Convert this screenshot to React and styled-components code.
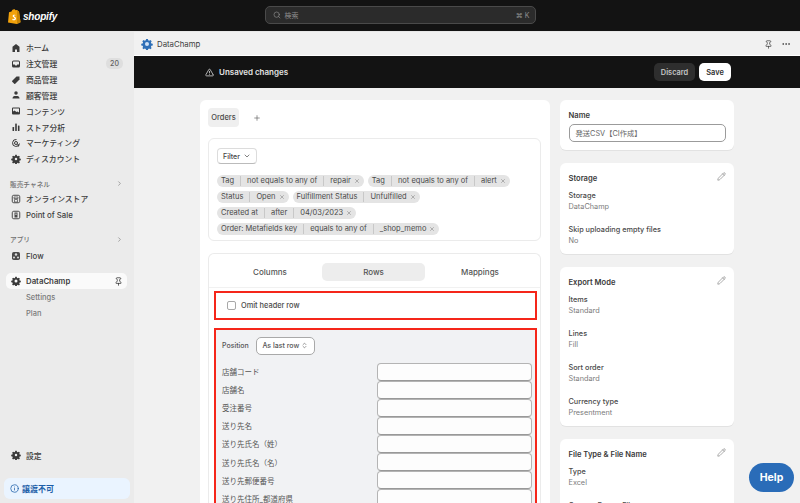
import React from "react";
import styled, { createGlobalStyle } from "styled-components";
import { Search, TriangleAlert, Pencil, ChevronRight, ChevronDown, ChevronsUpDown, Pin, Ellipsis, Info, Plus, X } from "lucide-react";

const FONT = `Inter, "Noto Sans CJK JP", "Noto Sans", sans-serif`;

const Global = createGlobalStyle`
  * { box-sizing: border-box; }
  html, body { margin: 0; padding: 0; background: #f1f1f1; }
  body { font-family: ${FONT}; color: #303030; -webkit-font-smoothing: antialiased; }
`;

const Frame = styled.div`
  position: relative; width: 800px; height: 503px; overflow: hidden;
  display: flex; flex-direction: column; background: #f1f1f1;
`;
const TopBar = styled.header`
  height: 32px; flex: none; background: #131313; position: relative;
  display: flex; align-items: center; justify-content: center; border-bottom: 1px solid #e8e8e8;
`;
const Brand = styled.div`
  position: absolute; left: 8px; top: 9px; display: flex; align-items: center; gap: 2px;
`;
const BrandText = styled.span`
  font-family: "Liberation Sans", sans-serif; font-weight: 700; font-style: italic;
  font-size: 10px; color: #fff; letter-spacing: -0.2px;
`;
const SearchBox = styled.div`
  width: 271px; height: 18px; margin-top: -1px; border-radius: 5px; background: #2b2b2b; border: 1px solid #4a4a4a;
  display: flex; align-items: center; gap: 4px; padding: 0 5px 0 7px; color: #8d8d8d; font-size: 7px;
  span:last-child { margin-left: auto; }
`;
const Body = styled.div`
  flex: 1; min-height: 0; display: flex;
`;
const Sidebar = styled.nav`
  width: 134px; flex: none; background: #ebebeb; display: flex; flex-direction: column; padding: 8px 0 4px;
`;
const NavItem = styled.div`
  height: ${p => (p.$active ? 16 : 15.85)}px; flex: none; display: flex; align-items: center; gap: 5px;
  margin: ${p => (p.$active ? "9px 7px 0 6px" : "0 11px")}; padding: ${p => (p.$active ? "0 4px 0 5px" : "0")};
  font-size: 7.8px; font-weight: ${p => (p.$active ? 600 : 500)}; color: #3d3d3d;
  background: ${p => (p.$active ? "#fafafa" : "transparent")}; border-radius: 5px;
  svg { flex: none; }
`;
const NavBadge = styled.span`
  margin-left: auto; width: 17px; height: 11px; border-radius: 5px; background: #dedede;
  font-size: 7px; color: #616161; display: flex; align-items: center; justify-content: center;
`;
const NavPin = styled.span`
  margin-left: auto; display: flex; color: #303030;
`;
const SubItem = styled.div`
  height: 16px; padding-left: 26px; display: flex; align-items: center; font-size: 7.5px; color: #7a7a7a; font-weight: 500;
`;
const NavHead = styled.div`
  height: 14px; flex: none; margin: 10px 11px ${p => p.$bottom || 0}px 10px; display: flex; align-items: center; justify-content: space-between;
  font-size: 6.7px; color: #6f6f6f; font-weight: 500;
`;
const NavSpacer = styled.div`flex: 1;`;
const Banner = styled.div`
  margin: 15px 4px 0; height: 21px; flex: none; border-radius: 6px; background: #eaf4ff; color: #1c5ea8;
  display: flex; align-items: center; gap: 3px; padding-left: 6px; font-size: 8px; font-weight: 600;
`;
const Main = styled.main`
  flex: 1; min-width: 0; display: flex; flex-direction: column;
`;
const AppHeader = styled.div`
  height: 24px; flex: none; display: flex; align-items: center; gap: 4px; padding: 1px 9px 0 7px; font-size: 7.8px; color: #3d3d3d;
  border-bottom: 1px solid #fff;
`;
const HeaderActions = styled.div`
  margin-left: auto; display: flex; align-items: center; gap: 8px; color: #444;
`;
const SaveBar = styled.div`
  height: 32px; flex: none; background: #131313; display: flex; align-items: center; padding: 0 69px 0 71px; color: #e3e3e3;
  font-size: 8px; font-weight: 600; gap: 5px;
`;
const BarActions = styled.div`margin-left: auto; display: flex; gap: 4px;`;
const DarkButton = styled.button`
  height: 18px; width: ${p => (p.$primary ? 32 : 41)}px; padding: 0; border: 0; border-radius: 5px; font: 600 7.4px ${FONT};
  background: ${p => (p.$primary ? "#fff" : "#2e2e2e")}; color: ${p => (p.$primary ? "#303030" : "#c4c4c4")};
`;
const Content = styled.div`
  flex: 1; display: flex; gap: 10px; padding: 12px 0 0 66px; overflow: hidden; align-items: flex-start;
`;
const LeftCard = styled.section`
  width: 350px; flex: none; background: #fff; border-radius: 6px 6px 0 0; padding: 8px 9px 0 8px;
`;
const OrderTabs = styled.div`display: flex; align-items: center; gap: 14px; color: #616161; margin-bottom: 11px;`;
const OrderTab = styled.div`
  width: 31px; height: 19px; border-radius: 4px; background: #efefef; font-size: 7.5px; font-weight: 500; color: #4a4a4a;
  display: flex; align-items: center; justify-content: center;
`;
const Inner = styled.div`
  border: 1px solid #ebebeb; border-radius: 6px; background: #fff;
`;
const FilterCard = styled(Inner)`
  height: 103px; padding: 9px 8px; margin-bottom: 12px;
`;
const FilterBtn = styled.div`
  width: 40px; height: 16px; border-radius: 4px; border: 1px solid #dcdcdc; border-bottom-color: #bbb;
  display: flex; align-items: center; justify-content: center; gap: 3px; font-size: 7px; font-weight: 500; color: #444; margin-bottom: 11px;
`;
const ChipWrap = styled.div`display: flex; flex-wrap: wrap; gap: 4px; width: 316px;`;
const Chip = styled.div`
  height: 12px; border-radius: 6px; background: #e4e4e4; display: flex; align-items: center; padding: 0 4px; font-size: 7.5px;
  color: #4a4a4a; white-space: nowrap; font-weight: 400;
  svg { margin-left: 3px; color: #777; }
`;
const ChipPart = styled.span`
  padding: 0 6px; border-left: 1px solid #c8c8c8; line-height: 10px;
  &:first-child { padding-left: 0; border-left: 0; }
  &:nth-last-of-type(1) { padding-right: 0; }
`;
const TabsCard = styled(Inner)`border-radius: 6px 6px 0 0; border-bottom: 0;`;
const TabRow = styled.div`
  height: 34px; display: grid; grid-template-columns: 104px 103px 110px; align-items: center;
  padding: 2px 0 0 9px; border-bottom: 1px solid #f1f1f1; margin: 0 0 3px;
`;
const TabItem = styled.div`
  height: 18px; border-radius: 5px; display: flex; align-items: center; justify-content: center; font-size: 8px; font-weight: 500; color: #555;
  background: ${p => (p.$active ? "#ededed" : "transparent")};
`;
const RedBox = styled.div`
  margin: 0 3px 8px 5px; border: 2px solid #f5261a; background: ${p => (p.$grey ? "#f1f2f4" : "#fff")};
`;
const OmitRow = styled.div`
  height: 25px; display: flex; align-items: center; gap: 5px; padding-left: 11px; font-size: 7.4px; font-weight: 500; color: #4a4a4a;
`;
const Checkbox = styled.span`
  width: 9px; height: 9px; border: 1px solid #a8a8a8; border-radius: 2px; background: #fff;
`;
const PositionRow = styled.div`
  display: flex; align-items: center; gap: 7px; padding: 6px 6px 0; height: 25px; font-size: 7px; color: #555; font-weight: 500; margin-bottom: 7.5px;
`;
const Select = styled.div`
  width: 59px; height: 18px; border-radius: 5px; border: 1px solid #a9a9a9; background: #fff;
  display: flex; align-items: center; justify-content: center; gap: 2px; font-size: 7px; color: #555;
`;
const FieldRow = styled.div`
  display: flex; align-items: center; justify-content: space-between; height: 18.1px; padding: 0 3px 0 6px; font-size: 7.5px; color: #555;
`;
const FieldInput = styled.div`
  width: 155px; height: 18.1px; border-radius: 4px; border: 1px solid #b4b4b4; border-bottom-color: #999; background: #fdfdfd;
`;
const RightCol = styled.aside`
  width: 174px; flex: none; display: flex; flex-direction: column; gap: 13px;
`;
const Card = styled.section`
  position: relative; background: #fff; border-radius: 6px; padding: 9.5px 8.5px 8.5px; box-shadow: 0 1px 0 #e2e2e2; flex: none;
`;
const CardTitle = styled.h3`
  margin: 0 0 6px; font-size: 7.6px; font-weight: 600; color: #3a3a3a; line-height: 11px;
`;
const NameInput = styled.div`
  height: 18px; margin-top: -3px; border-radius: 5px; border: 1px solid #9b9b9b; padding-left: 6px; font-size: 7.3px; color: #666;
  display: flex; align-items: center;
`;
const EditIcon = styled.span`
  position: absolute; right: 8px; top: 9px; display: flex; color: #777;
`;
const Prop = styled.div`
  margin-bottom: 12px; font-size: 7.3px; line-height: 11px; color: #4a4a4a; font-weight: 500;
  &:last-child { margin-bottom: 0; }
`;
const PropValue = styled.div`color: #7b7b7b; font-weight: 400;`;
const HelpButton = styled.div`
  position: absolute; right: 6px; top: 463px; width: 45px; height: 29px; border-radius: 15px; background: #2a6cb8; color: #fff;
  display: flex; align-items: center; justify-content: center; font-size: 10.5px; font-weight: 700;
`;

const Ico = ({ children, s = 10 }) => (
  <svg width={s} height={s} viewBox="0 0 20 20" fill="#3a3a3a">{children}</svg>
);
const GearPath = "M8.5 1.5h3l.5 2.4 1.7.7 2-1.3 2.1 2.1-1.3 2 .7 1.7 2.4.5v3l-2.4.5-.7 1.7 1.3 2-2.1 2.1-2-1.3-1.7.7-.5 2.4h-3l-.5-2.4-1.7-.7-2 1.3-2.1-2.1 1.3-2-.7-1.7-2.4-.5v-3l2.4-.5.7-1.7-1.3-2 2.1-2.1 2 1.3 1.7-.7z";
const icons = {
  home: <Ico><path d="M10 2 3 7.5V18h5v-5h4v5h5V7.5z" /></Ico>,
  inbox: <Ico><path fillRule="evenodd" d="M5 3h10a3 3 0 0 1 3 3v8a3 3 0 0 1-3 3H5a3 3 0 0 1-3-3V6a3 3 0 0 1 3-3zm-1 8h3.5l1 2h3l1-2H16V6a1 1 0 0 0-1-1H5a1 1 0 0 0-1 1z" /></Ico>,
  tag: <Ico><path d="M11 3h6v6l-8.5 8.5a1.5 1.5 0 0 1-2 0l-4-4a1.5 1.5 0 0 1 0-2z" /></Ico>,
  user: <Ico><circle cx="10" cy="6" r="3.5" /><path d="M3 17c0-3 2-5 4-5h6c2 0 4 2 4 5z" /></Ico>,
  image: <Ico><path fillRule="evenodd" d="M4 3h12a2 2 0 0 1 2 2v10a2 2 0 0 1-2 2H4a2 2 0 0 1-2-2V5a2 2 0 0 1 2-2zm0 2v6l3-2 4 3 2-1 3 2V5z" /></Ico>,
  chart: <Ico><rect x="3" y="10" width="3.2" height="8" rx="1" /><rect x="8.4" y="3" width="3.2" height="15" rx="1" /><rect x="13.8" y="7" width="3.2" height="11" rx="1" /></Ico>,
  target: <Ico><path fill="none" stroke="#3a3a3a" strokeWidth="2" d="M11 3a7 7 0 1 0 6 8" /><circle cx="10" cy="10" r="3" fill="none" stroke="#3a3a3a" strokeWidth="2" /><path d="m12 12 6 2-2 1-1 3z" /></Ico>,
  gear: <Ico><path fillRule="evenodd" d={GearPath + "M10 7.5a2.5 2.5 0 1 0 0 5 2.5 2.5 0 0 0 0-5z"} /></Ico>,
  store: <Ico><rect x="2.5" y="2.5" width="15" height="15" rx="3" fill="#e9e9e9" stroke="#4a4a4a" strokeWidth="2" /><path d="M6 6h8v3H6zM7 11h6v5H7z" fill="none" stroke="#4a4a4a" strokeWidth="1.4" /></Ico>,
  pos: <Ico><rect x="2.5" y="2.5" width="15" height="15" rx="3" fill="#e9e9e9" stroke="#4a4a4a" strokeWidth="2" /><path d="M7 5h6v10H7z" fill="#4a4a4a" /><path d="M9 7h2v3H9z" fill="#eee" /></Ico>,
  flow: <Ico><rect x="2" y="2" width="16" height="16" rx="3.5" fill="#4a4a4a" /><circle cx="10" cy="7" r="2.4" fill="#ddd" /><circle cx="6" cy="13" r="2" fill="#ddd" /><circle cx="14" cy="13" r="2" fill="#ddd" /></Ico>,
};

const Bag = () => (
  <svg width="13" height="15" viewBox="0 0 13 15">
    <path d="M1 3.2 3.5 2.4C4 1 5 .3 6 .3c.8 0 1.3.5 1.6 1L9 1l1 1.2 1 .2 1.5 10.6L8.6 15 0 13.4z" fill="#f2a20c" />
    <path d="M9 1v14l3.5-1.4L11 2.4z" fill="#c98505" />
    <path d="M7.2 5.8c-.5-.2-2.6-.4-2.6 1.2 0 1.4 2 1.4 2 2.6 0 .8-1.2.7-2 .2l-.3 1.2c1.4.7 3.7.3 3.7-1.6 0-1.6-2-1.7-2-2.5 0-.5.7-.5 1.4-.2z" fill="#fff" />
  </svg>
);
const CogLogo = ({ color = "#2e6fb7", size = 12, dot = true }) => (
  <svg width={size} height={size} viewBox="0 0 20 20">
    <path fill={color} d={GearPath} />
    {dot && <circle cx="10" cy="10" r="3.4" fill="#cfe0f5" />}
    {!dot && <circle cx="10" cy="10" r="3" fill="#fafafa" />}
  </svg>
);
const PinIcon = ({ size = 10 }) => <Pin size={size} strokeWidth={2} />;

const navMain = [
  ["home", "ホーム"], ["inbox", "注文管理", "20"], ["tag", "商品管理"], ["user", "顧客管理"],
  ["image", "コンテンツ"], ["chart", "ストア分析"], ["target", "マーケティング"], ["gear", "ディスカウント"],
];
const chips = [
  ["Tag", "not equals to any of", "repair"],
  ["Tag", "not equals to any of", "alert"],
  ["Status", "Open"],
  ["Fulfillment Status", "Unfulfilled"],
  ["Created at", "after", "04/03/2023"],
  ["Order: Metafields key", "equals to any of", "_shop_memo"],
];
const fields = ["店舗コード", "店舗名", "受注番号", "送り先名", "送り先氏名（姓）", "送り先氏名（名）", "送り先郵便番号", "送り先住所_都道府県"];
const cards = [
  { title: "Storage", props: [["Storage", "DataChamp"], ["Skip uploading empty files", "No"]] },
  { title: "Export Mode", props: [["Items", "Standard"], ["Lines", "Fill"], ["Sort order", "Standard"], ["Currency type", "Presentment"]] },
  { title: "File Type & File Name", props: [["Type", "Excel"], ["Custom Export File", "No"]] },
];

export default function App() {
  return (
    <Frame>
      <Global />
      <TopBar>
        <Brand><Bag /><BrandText>shopify</BrandText></Brand>
        <SearchBox>
          <Search size={8} strokeWidth={2} />
          <span>検索</span>
          <span>⌘ K</span>
        </SearchBox>
      </TopBar>
      <Body>
        <Sidebar>
          {navMain.map(([icon, label, badge]) => (
            <NavItem key={label}>
              {icons[icon]}{label}
              {badge && <NavBadge>{badge}</NavBadge>}
            </NavItem>
          ))}
          <NavHead>販売チャネル<ChevronRight size={7} /></NavHead>
          <NavItem>{icons.store}オンラインストア</NavItem>
          <NavItem>{icons.pos}Point of Sale</NavItem>
          <NavHead $bottom={2}>アプリ<ChevronRight size={7} /></NavHead>
          <NavItem>{icons.flow}Flow</NavItem>
          <NavItem $active>
            <CogLogo color="#3a3a3a" size={10} dot={false} />DataChamp
            <NavPin><PinIcon size={9} /></NavPin>
          </NavItem>
          <SubItem>Settings</SubItem>
          <SubItem>Plan</SubItem>
          <NavSpacer />
          <NavItem>{icons.gear}設定</NavItem>
          <Banner><Info size={9} strokeWidth={2} />譲渡不可</Banner>
        </Sidebar>
        <Main>
          <AppHeader>
            <CogLogo />DataChamp
            <HeaderActions><PinIcon size={9} /><Ellipsis size={10} /></HeaderActions>
          </AppHeader>
          <SaveBar>
            <TriangleAlert size={9} strokeWidth={2} />Unsaved changes
            <BarActions>
              <DarkButton>Discard</DarkButton>
              <DarkButton $primary>Save</DarkButton>
            </BarActions>
          </SaveBar>
          <Content>
            <LeftCard>
              <OrderTabs><OrderTab>Orders</OrderTab><Plus size={8} /></OrderTabs>
              <FilterCard>
                <FilterBtn>Filter<ChevronDown size={8} /></FilterBtn>
                <ChipWrap>
                  {chips.map((parts, i) => (
                    <Chip key={i}>
                      {parts.map(p => <ChipPart key={p}>{p}</ChipPart>)}
                      <X size={6} />
                    </Chip>
                  ))}
                </ChipWrap>
              </FilterCard>
              <TabsCard>
                <TabRow>
                  <TabItem>Columns</TabItem>
                  <TabItem $active>Rows</TabItem>
                  <TabItem>Mappings</TabItem>
                </TabRow>
                <RedBox><OmitRow><Checkbox />Omit header row</OmitRow></RedBox>
                <RedBox $grey>
                  <PositionRow>Position<Select>As last row<ChevronsUpDown size={7} /></Select></PositionRow>
                  {fields.map(f => (
                    <FieldRow key={f}>{f}<FieldInput /></FieldRow>
                  ))}
                </RedBox>
              </TabsCard>
            </LeftCard>
            <RightCol>
              <Card>
                <CardTitle>Name</CardTitle>
                <NameInput>発送CSV【CI作成】</NameInput>
              </Card>
              {cards.map(c => (
                <Card key={c.title}>
                  <CardTitle>{c.title}</CardTitle>
                  <EditIcon><Pencil size={9} strokeWidth={1.6} /></EditIcon>
                  {c.props.map(([k, v]) => (
                    <Prop key={k}>{k}<PropValue>{v}</PropValue></Prop>
                  ))}
                </Card>
              ))}
            </RightCol>
          </Content>
        </Main>
      </Body>
      <HelpButton>Help</HelpButton>
    </Frame>
  );
}
